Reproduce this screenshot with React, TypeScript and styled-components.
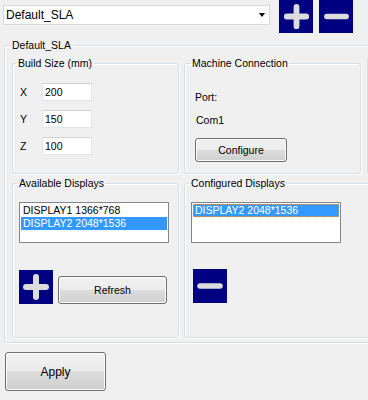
import React from 'react'
import styled, { createGlobalStyle } from 'styled-components'

const GlobalStyle = createGlobalStyle`
  html, body {
    margin: 0;
    padding: 0;
    background: #f0f0f0;
  }
  body {
    font-family: "Liberation Sans", Arial, sans-serif;
    font-size: 10.5px;
    color: #000;
  }
`

const Window = styled.div`
  width: 368px;
  height: 400px;
  overflow: hidden;
  background: #f0f0f0;
`

const TopRow = styled.div`
  display: flex;
  align-items: flex-start;
  padding-left: 3px;
`

const Combo = styled.div`
  box-sizing: border-box;
  width: 267px;
  height: 20px;
  margin-top: 5px;
  margin-right: 9px;
  padding: 0 4px 0 2px;
  display: flex;
  align-items: center;
  justify-content: space-between;
  background: #fff;
  border: 1px solid #d9d9d9;
  font-size: 12px;
`

const Arrow = styled.span`
  width: 0;
  height: 0;
  border-left: 3.5px solid transparent;
  border-right: 3.5px solid transparent;
  border-top: 4px solid #000;
`

const BlueButton = styled.button<{ $w: number; $h: number; $gap?: number }>`
  width: ${p => p.$w}px;
  height: ${p => p.$h}px;
  margin: 0 0 0 ${p => p.$gap || 0}px;
  padding: 0;
  border: none;
  background: #000080;
  display: flex;
  align-items: center;
  justify-content: center;
  flex-shrink: 0;
`

const Group = styled.fieldset<{ $w: number; $h: number }>`
  box-sizing: border-box;
  width: ${p => p.$w}px;
  height: ${p => p.$h}px;
  margin: 0;
  padding: 0;
  flex-shrink: 0;
  border: 1px solid #d5dfe5;
  border-radius: 3px;
  box-shadow: inset 1px 1px 0 #fff, 1px 1px 0 #fff;
`

const Caption = styled.legend<{ $ml: number }>`
  padding: 0 2px;
  margin-left: ${p => p.$ml}px;
  line-height: 12px;
  font-size: 10.5px;
`

const Outer = styled(Group)`
  margin: 6px 0 0 4px;
`

const OuterBody = styled.div`
  padding: 6px 0 0 7px;
  display: flex;
  flex-direction: column;
  gap: 3px;
`

const Row = styled.div`
  display: flex;
  gap: 5px;
`

const GroupBody = styled.div<{ $pt: number; $pl: number }>`
  padding: ${p => p.$pt}px 0 0 ${p => p.$pl}px;
  display: flex;
  flex-direction: column;
  align-items: flex-start;
`

const FieldRow = styled.div`
  display: flex;
  align-items: center;
  margin-bottom: 9px;
`

const FieldLabel = styled.span`
  width: 22px;
`

const TextBox = styled.div`
  box-sizing: border-box;
  width: 50px;
  height: 18px;
  padding-left: 2px;
  display: flex;
  align-items: center;
  background: #fff;
  border: 1px solid #e1e4e8;
  border-top-color: #cfd3d8;
`

const Line = styled.div<{ $mt?: number; $ml?: number }>`
  line-height: 12px;
  margin-top: ${p => p.$mt || 0}px;
  margin-left: ${p => p.$ml || 0}px;
`

const PushButton = styled.button<{ $w: number; $h: number; $fs?: number }>`
  box-sizing: border-box;
  width: ${p => p.$w}px;
  height: ${p => p.$h}px;
  padding: 0;
  font-family: "Liberation Sans", Arial, sans-serif;
  font-size: ${p => p.$fs || 10.5}px;
  color: #000;
  border: 1px solid #707070;
  border-radius: 3px;
  background: linear-gradient(#f2f2f2 0%, #ebebeb 50%, #dddddd 50%, #cfcfcf 100%);
  box-shadow: inset 0 0 0 1px #fbfbfb;
`

const ListBox = styled.div`
  box-sizing: border-box;
  width: 150px;
  height: 41px;
  padding: 1px;
  background: #fff;
  border: 1px solid #828790;
`

const ListItem = styled.div<{ $selected?: boolean; $focus?: boolean }>`
  line-height: 13px;
  padding-left: 2px;
  white-space: nowrap;
  background: ${p => (p.$selected ? '#3399ff' : 'transparent')};
  color: ${p => (p.$selected ? '#fff' : '#000')};
  outline: ${p => (p.$focus ? '1px dotted #c8a070' : 'none')};
  outline-offset: -1px;
`

const ButtonRow = styled.div<{ $mt: number; $ml?: number }>`
  display: flex;
  align-items: flex-end;
  gap: 5px;
  margin-top: ${p => p.$mt}px;
  margin-left: ${p => p.$ml || 0}px;
`

const ApplyRow = styled.div`
  padding: 9px 0 0 5px;
`

function PlusIcon({ size }: { size: number }) {
  return (
    <svg width={size} height={size} viewBox="0 0 34 34">
      <path d="M7 17 H27 M17 7 V27" stroke="#dcdcdc" strokeWidth="6" strokeLinecap="round" fill="none" />
    </svg>
  )
}

function MinusIcon({ size }: { size: number }) {
  return (
    <svg width={size} height={size} viewBox="0 0 34 34">
      <path d="M7 17 H27" stroke="#dcdcdc" strokeWidth="5.5" strokeLinecap="round" fill="none" />
    </svg>
  )
}

export default function App() {
  return (
    <Window>
      <GlobalStyle />
      <TopRow>
        <Combo>
          <span>Default_SLA</span>
          <Arrow />
        </Combo>
        <BlueButton $w={34} $h={33}>
          <PlusIcon size={33} />
        </BlueButton>
        <BlueButton $w={34} $h={33} $gap={6}>
          <MinusIcon size={33} />
        </BlueButton>
      </TopRow>

      <Outer $w={380} $h={304}>
        <Caption $ml={5}>Default_SLA</Caption>
        <OuterBody>
          <Row>
            <Group $w={167} $h={117}>
              <Caption $ml={3}>Build Size (mm)</Caption>
              <GroupBody $pt={14} $pl={7}>
                <FieldRow>
                  <FieldLabel>X</FieldLabel>
                  <TextBox>200</TextBox>
                </FieldRow>
                <FieldRow>
                  <FieldLabel>Y</FieldLabel>
                  <TextBox>150</TextBox>
                </FieldRow>
                <FieldRow>
                  <FieldLabel>Z</FieldLabel>
                  <TextBox>100</TextBox>
                </FieldRow>
              </GroupBody>
            </Group>
            <Group $w={177} $h={117}>
              <Caption $ml={5}>Machine Connection</Caption>
              <GroupBody $pt={22} $pl={10}>
                <Line>Port:</Line>
                <Line $mt={11} $ml={1}>Com1</Line>
                <Line $mt={12}>
                  <PushButton $w={92} $h={24}>Configure</PushButton>
                </Line>
              </GroupBody>
            </Group>
            <Group $w={60} $h={117} style={{ marginLeft: 1 }} />
          </Row>
          <Row>
            <Group $w={167} $h={161}>
              <Caption $ml={4}>Available Displays</Caption>
              <GroupBody $pt={13} $pl={6}>
                <ListBox>
                  <ListItem>DISPLAY1 1366*768</ListItem>
                  <ListItem $selected>DISPLAY2 2048*1536</ListItem>
                </ListBox>
                <ButtonRow $mt={27}>
                  <BlueButton $w={34} $h={34}>
                    <PlusIcon size={34} />
                  </BlueButton>
                  <PushButton $w={109} $h={28}>Refresh</PushButton>
                </ButtonRow>
              </GroupBody>
            </Group>
            <Group $w={200} $h={161}>
              <Caption $ml={4}>Configured Displays</Caption>
              <GroupBody $pt={13} $pl={6}>
                <ListBox>
                  <ListItem $selected $focus>DISPLAY2 2048*1536</ListItem>
                </ListBox>
                <ButtonRow $mt={26} $ml={2}>
                  <BlueButton $w={34} $h={34}>
                    <MinusIcon size={34} />
                  </BlueButton>
                </ButtonRow>
              </GroupBody>
            </Group>
          </Row>
        </OuterBody>
      </Outer>

      <ApplyRow>
        <PushButton $w={101} $h={39} $fs={12}>Apply</PushButton>
      </ApplyRow>
    </Window>
  )
}
